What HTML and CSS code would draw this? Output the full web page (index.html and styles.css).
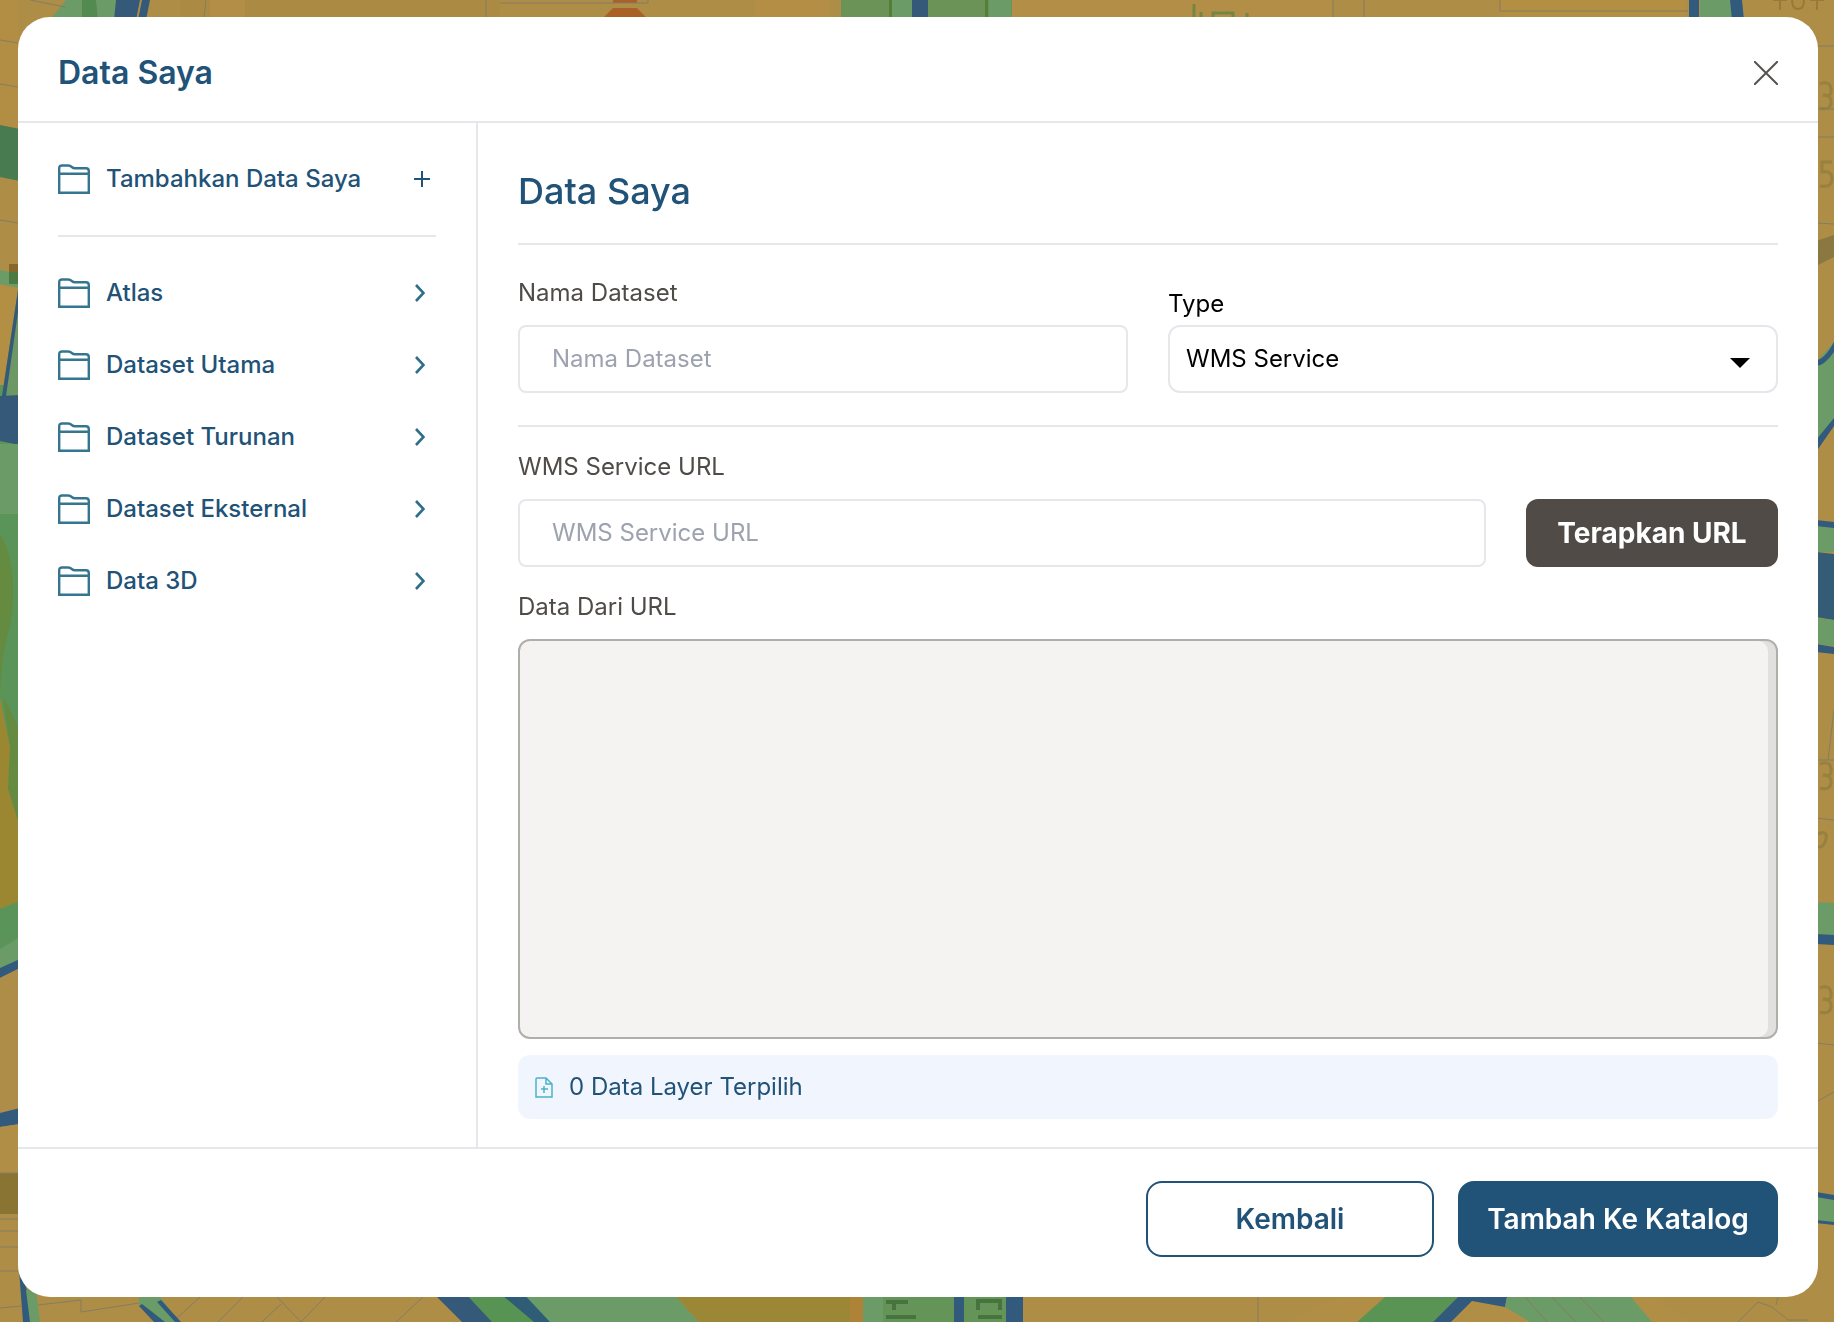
FILE: index.html
```html
<!DOCTYPE html>
<html lang="id">
<head>
<meta charset="utf-8">
<meta name="viewport" content="width=device-width, initial-scale=1">
<title>Data Saya</title>
<link rel="stylesheet" href="styles.css">
</head>
<body>
<svg class="map" viewBox="0 0 1834 1322" preserveAspectRatio="xMidYMid slice" aria-hidden="true">
  <rect width="1834" height="1322" fill="#ae8d46"/>
  <rect width="18" height="130" fill="#b18e43"/>
  <rect x="180" width="320" height="20" fill="#ab8b43"/>
  <rect x="210" width="35" height="20" fill="#b38e46"/>
  <rect x="755" width="75" height="20" fill="#b58e46"/>
  <rect x="1012" width="320" height="20" fill="#b38e46"/>
  <rect x="1500" width="185" height="20" fill="#b38f43"/>
  <!-- top edge -->
  <path d="M66 0h50l-2 20H50z" fill="#6b9c68"/>
  <path d="M82 0h14l2 20H82z" fill="#538a50"/>
  <path d="M116 0h24l-4 20h-22zM142 0h8l-4 20h-8z" fill="#345979"/>
  <path d="M613 0h24v3h-24zM613 8h24l9 9v3h-42v-3z" fill="#aa6128"/>
  <path d="M841 0h71v20h-71zM928 0h84v20h-84z" fill="#6b9358"/>
  <path d="M889 0h3v20h-3zM985 0h3v20h-3z" fill="#577e37"/>
  <path d="M892 0h20v20h-20zM989 0h22v20h-22z" fill="#6b9c68"/>
  <path d="M912 0h16v20h-16z" fill="#345979"/>
  <path d="M1700 0h32v20h-32z" fill="#6b9c68"/>
  <path d="M1689 0h10v20h-10zM1730 0h12l2 20h-12z" fill="#315a7c"/>
  <path d="M1194 4v13M1201 12v5M1213 17v-4h20v4M1247 13v4" fill="none" stroke="#758546" stroke-width="3"/>
  <path d="M1773 0h14M1780 0v10M1792 0q0 9 6 9t6-9M1810 0h14M1817 0v10" fill="none" stroke="#98793a" stroke-width="2"/>
  <!-- left edge -->
  <path d="M0 125l20 4v52l-20-4z" fill="#487b50"/>
  <path d="M0 270l20 4v14l-20-4z" fill="#6b9c68"/>
  <path d="M9 264h9v8H9z" fill="#86692a"/>
  <path d="M9 272h9v12H9z" fill="#4b7a43"/>
  <path d="M0 290h20v620H0z" fill="#5b9458"/>
  <path d="M0 286l18 3-14 96H0z" fill="#b28f43"/>
  <path d="M4 394l14-96 2 20v90H0z" fill="#6b9863"/>
  <path d="M18 290v22L6 396H2z" fill="#345979"/>
  <path d="M0 396l20-1v50l-20-4z" fill="#345979"/>
  <path d="M0 444h20v70H0z" fill="#6b9c68"/>
  <path d="M0 534q12 20 13 50t-5 50-8 60z" fill="#648b40"/>
  <path d="M3 696l15 30v100l-10-37 2-42z" fill="#648b40"/>
  <path d="M0 697l10 50-2 42 12 38v74l-20 8z" fill="#9b8632"/>
  <path d="M0 909l20-8v60l-20 8z" fill="#5b9458"/>
  <path d="M0 949l20-12v24l-20 8z" fill="#6b9c68"/>
  <path d="M0 968l20-9v9l-20 10z" fill="#315a7c"/>
  <path d="M0 978l20-10v145H0z" fill="#ad8d47"/>
  <path d="M0 1113l20-5v16l-20 3z" fill="#315a7c"/>
  <path d="M0 1127l20-3v50H0z" fill="#b18e45"/>
  <path d="M0 1173h20v41H0z" fill="#8a7433"/>
  <!-- right edge -->
  <path d="M1816 241l18-6v22l-18 9z" fill="#8a7840"/>
  <path d="M1816 362l18-20v80l-18 26z" fill="#6b9c68"/>
  <path d="M1816 360q8 0 18-18v10q-10 14-18 14zM1816 440l18-22v8l-18 26z" fill="#315a7c"/>
  <path d="M1816 522h18v30h-18z" fill="#6b9c68"/>
  <path d="M1816 520l18 2v6l-18-2z" fill="#315a7c"/>
  <path d="M1816 552l18 2v66l-18-3z" fill="#345c77"/>
  <path d="M1816 618l18 2v26l-18-2z" fill="#6b9c68"/>
  <path d="M1816 644l18 3v7l-18-2z" fill="#315a7c"/>
  <path d="M1816 902l18 1v33l-18-1z" fill="#6b9c68"/>
  <path d="M1816 934l18 1v10l-18-1z" fill="#315a7c"/>
  <path d="M1816 1194l18 3v26l-18-3z" fill="#6b9c68"/>
  <path d="M1816 1192l18 3v5l-18-3zM1816 1220l18 2v3l-18-2z" fill="#315a7c"/>
  <g fill="none" stroke="#98803f" stroke-width="3">
    <path d="M1820 84q10-4 11 5t-8 6q9 0 8 8t-11 5M1832 162h-10v10q10-2 10 7t-12 7M1820 764q10-4 11 5t-8 6q9 0 8 8t-11 5M1818 834q10-4 8 5t-8 8M1820 988q10-4 11 5t-8 6q9 0 8 8t-11 5"/>
  </g>
  <!-- bottom edge -->
  <path d="M19 1270l8 20 6 32H23z" fill="#315a7c"/>
  <path d="M26 1290h10l4 32H30z" fill="#6b9c68"/>
  <path d="M139 1290h22v8l18 24h-17l-23-16z" fill="#6b9c68"/>
  <path d="M139 1306l3-2 23 18h-11zM157 1302l4-2 20 22h-6z" fill="#315a7c"/>
  <path d="M430 1290h35l33 32h-36z" fill="#345979"/>
  <path d="M462 1290h42l32 32h-44z" fill="#579453"/>
  <path d="M496 1290h29l28 32h-19z" fill="#2f5d77"/>
  <path d="M520 1290h150l29 32H550z" fill="#6b9c68"/>
  <path d="M670 1290h180v32H699z" fill="#9b8735"/>
  <path d="M850 1290h13v32h-13z" fill="#ae8338"/>
  <path d="M863 1290h160v32H863z" fill="#659458"/>
  <path d="M863 1290h20v32h-20z" fill="#6b9c68"/>
  <path d="M954 1290h10v32h-10zM1006 1290h17v32h-17z" fill="#315a7c"/>
  <path d="M886 1302h22M894 1302v8M886 1317h30M978 1310v-9h22v9M978 1317h24" fill="none" stroke="#47733f" stroke-width="4"/>
  <path d="M1290 1322l50-25h312l40 25z" fill="#b18e45"/>
  <path d="M1385 1297h73l-25 25h-76z" fill="#5a9455"/>
  <path d="M1458 1297h49l-2 10-33-6-21 21h-18z" fill="#315a7c"/>
  <path d="M1507 1297h124l21 25h-122l-25-15z" fill="#6b9c68"/>
  <g fill="none" stroke="#857d62" stroke-width="1">
    <path d="M0 40l18 3M0 84l18 3M0 220l18 3M30 0l35 7M206 0l-2 18M486 0v18M500 3h148V0M1333 0v18M1364 0v18M1500 0v11h188"/>
    <path d="M1816 46h18M1816 109h18M1816 137h18M1816 223l18 1M1816 760h18M1816 818l18 2M1816 1043l18 2M1816 1102l18-10M1828 760l6-50"/>
    <path d="M0 1173h18M0 1219h18M0 1231h18M0 1247h18M0 1271h18M0 1308l22-2M38 1305l43-5v12l58-9M177 1318l23-21M218 1322l25-25M262 1322l19-18M277 1297l24 25 24-25M396 1322l27-25M1258 1297v25M1738 1322l20-20 14 5 16 13h20M1778 1297l-2 8M1525 1297l22 25M1552 1297l24 25M1580 1297l24 25"/>
  </g>
</svg>

<main class="dialog" role="dialog" aria-labelledby="dialog-title">
  <header class="dialog-header">
    <h1 class="dialog-title" id="dialog-title">Data Saya</h1>
    <button class="close" type="button" aria-label="Tutup">
      <svg width="24" height="24" viewBox="0 0 24 24" fill="none" stroke="currentColor" stroke-width="2"><path d="M0 0l24 24M24 0L0 24"/></svg>
    </button>
  </header>

  <div class="dialog-body">
    <nav class="sidebar" aria-label="Katalog data">
      <button class="nav-item" type="button">
        <svg class="folder" viewBox="0 0 32 30"><use href="#folder"/></svg>
        <span class="nav-label">Tambahkan Data Saya</span>
        <svg class="plus" width="16" height="16" viewBox="0 0 16 16"><path d="M8 0v16M0 8h16"/></svg>
      </button>
      <ul class="nav-list">
        <li><button class="nav-item" type="button"><svg class="folder" viewBox="0 0 32 30"><use href="#folder"/></svg><span class="nav-label">Atlas</span><svg class="chevron" viewBox="0 0 10 18"><use href="#chevron"/></svg></button></li>
        <li><button class="nav-item" type="button"><svg class="folder" viewBox="0 0 32 30"><use href="#folder"/></svg><span class="nav-label">Dataset Utama</span><svg class="chevron" viewBox="0 0 10 18"><use href="#chevron"/></svg></button></li>
        <li><button class="nav-item" type="button"><svg class="folder" viewBox="0 0 32 30"><use href="#folder"/></svg><span class="nav-label">Dataset Turunan</span><svg class="chevron" viewBox="0 0 10 18"><use href="#chevron"/></svg></button></li>
        <li><button class="nav-item" type="button"><svg class="folder" viewBox="0 0 32 30"><use href="#folder"/></svg><span class="nav-label">Dataset Eksternal</span><svg class="chevron" viewBox="0 0 10 18"><use href="#chevron"/></svg></button></li>
        <li><button class="nav-item" type="button"><svg class="folder" viewBox="0 0 32 30"><use href="#folder"/></svg><span class="nav-label">Data 3D</span><svg class="chevron" viewBox="0 0 10 18"><use href="#chevron"/></svg></button></li>
      </ul>
    </nav>

    <section class="content">
      <h2 class="content-title">Data Saya</h2>
      <div class="form-row">
        <div class="field">
          <label class="label" for="dataset-name">Nama Dataset</label>
          <input class="input" id="dataset-name" type="text" placeholder="Nama Dataset">
        </div>
        <div class="field field-type">
          <label class="label label-type" for="dataset-type">Type</label>
          <div class="select-wrap">
            <select class="select" id="dataset-type"><option>WMS Service</option></select>
            <svg class="caret" width="20" height="12" viewBox="0 0 20 12"><path d="M0 1h20L10 11z"/></svg>
          </div>
        </div>
      </div>
      <div class="url-row">
        <div class="field url-field">
          <label class="label" for="service-url">WMS Service URL</label>
          <input class="input" id="service-url" type="text" placeholder="WMS Service URL">
        </div>
        <button class="apply" type="button">Terapkan URL</button>
      </div>
      <label class="label label-result" for="url-data">Data Dari URL</label>
      <textarea class="result" id="url-data" readonly></textarea>
      <p class="selected">
        <svg class="file" width="18" height="24" viewBox="0 0 18 24"><path d="M1 4q0-1 1-1h9l6 6v13H1zM11 3v6h6M9 11v7M6 14h7"/></svg>
        0 Data Layer Terpilih
      </p>
    </section>
  </div>

  <footer class="dialog-footer">
    <button class="action back" type="button">Kembali</button>
    <button class="action add" type="button">Tambah Ke Katalog</button>
  </footer>
</main>

<svg class="symbols" aria-hidden="true">
  <symbol id="folder" viewBox="0 0 32 30"><path d="M1.2 28.8V4.5q0-3 3-3h6q2 0 3.600 1.500t4 1.200h10.200q2.800 0 2.800 2.800v21.800zM1.200 9.700h29.600" fill="none" stroke="#35758f" stroke-width="2.400"/></symbol>
  <symbol id="chevron" viewBox="0 0 10 18"><path d="M1 1l7.500 8L1 17" fill="none" stroke="#2f6e89" stroke-width="2.600"/></symbol>
</svg>
</body>
</html>
```
FILE: styles.css
```css
*, *::before, *::after { box-sizing: border-box; }

:root {
  --navy: #215277;
  --line: #e5e7eb;
  --ink: #4f4b47;
}

body {
  margin: 0;
  min-height: 100vh;
  padding: 17px 16px 25px 18px;
  display: flex;
  font-family: Inter, "Liberation Sans", sans-serif;
  font-size: 24px;
  line-height: 36px;
  color: var(--navy);
}

button, input, select, textarea { font: inherit; margin: 0; }
button { cursor: pointer; }
h1, h2, p, ul { margin: 0; padding: 0; }

.map {
  position: fixed;
  inset: 0;
  width: 100%;
  height: 100%;
  z-index: -1;
}

.symbols { position: absolute; width: 0; height: 0; }

.dialog {
  flex: 1;
  min-width: 0;
  display: flex;
  flex-direction: column;
  background: #fff;
  border-radius: 32px;
}

.dialog-header {
  display: flex;
  align-items: center;
  justify-content: space-between;
  padding: 32px 40px 24px;
  border-bottom: 2px solid var(--line);
}

.dialog-title {
  font-size: 32px;
  line-height: 48px;
  font-weight: 600;
}

.close {
  display: flex;
  padding: 0;
  border: 0;
  background: none;
  color: #57534e;
}

.dialog-body { flex: 1; display: flex; }

.sidebar {
  flex: none;
  width: 460px;
  padding: 20px 40px;
  border-right: 2px solid var(--line);
}

.nav-item {
  display: flex;
  align-items: center;
  gap: 16px;
  width: 100%;
  height: 72px;
  padding: 0;
  border: 0;
  background: none;
  color: var(--navy);
  font-weight: 500;
  text-align: left;
}

.nav-label { flex: 1; }

.nav-list {
  list-style: none;
  margin-top: 20px;
  padding-top: 20px;
  border-top: 2px solid var(--line);
}

.folder { width: 32px; height: 30px; }

.plus {
  margin-right: 6px;
  stroke: var(--navy);
  stroke-width: 2;
}

.chevron { width: 10px; height: 18px; margin-right: 11px; }

.content {
  flex: 1;
  min-width: 0;
  display: flex;
  flex-direction: column;
  padding: 40px 40px 28px;
}

.content-title {
  padding-bottom: 24px;
  border-bottom: 2px solid var(--line);
  font-size: 36px;
  line-height: 56px;
  font-weight: 500;
}

.form-row {
  display: grid;
  grid-template-columns: 1fr 1fr;
  gap: 40px;
  align-items: end;
  padding: 30px 0 32px;
  border-bottom: 2px solid var(--line);
}

.field {
  display: flex;
  flex-direction: column;
  gap: 14px;
  min-width: 0;
}

.field-type { gap: 3px; }

.label { color: var(--ink); }
.label-type { color: #000; }

.input, .select {
  width: 100%;
  height: 68px;
  border: 2px solid var(--line);
  background: #fff;
  color: #000;
}

.input { padding: 0 32px 2px; border-radius: 8px; }
.input::placeholder { color: #9ca3af; opacity: 1; }

.select {
  appearance: none;
  padding: 0 16px;
  border-radius: 12px;
}

.select-wrap { position: relative; display: flex; }

.caret {
  position: absolute;
  right: 28px;
  top: 32px;
  pointer-events: none;
}

.url-row {
  display: flex;
  align-items: flex-end;
  gap: 40px;
  padding-top: 22px;
}

.url-field { flex: 1; }

.apply {
  width: 252px;
  height: 68px;
  padding: 0;
  border: 0;
  border-radius: 12px;
  background: #504b47;
  color: #fff;
  font-size: 28px;
  font-weight: 700;
}

.label-result { padding: 22px 0 14px; }

.result {
  flex: 1;
  min-height: 240px;
  padding: 16px;
  border: 2px solid #afaea9;
  border-radius: 12px;
  background: #f4f3f1;
  box-shadow: inset -8px 0 #e1e0de;
  color: var(--ink);
  resize: none;
}

.selected {
  display: flex;
  align-items: center;
  gap: 16px;
  margin-top: 16px;
  padding: 14px 17px;
  border-radius: 12px;
  background: #f1f5fd;
}

.file {
  fill: none;
  stroke: #4ab3cc;
  stroke-width: 1.5;
}

.dialog-footer {
  display: flex;
  justify-content: flex-end;
  gap: 24px;
  padding: 32px 40px 40px;
  border-top: 2px solid var(--line);
}

.action {
  width: 288px;
  height: 76px;
  padding: 0;
  border: 2px solid var(--navy);
  border-radius: 16px;
  font-size: 28px;
  font-weight: 600;
}

.back { background: #fff; color: var(--navy); }
.add { width: 320px; background: var(--navy); color: #fff; }
```
